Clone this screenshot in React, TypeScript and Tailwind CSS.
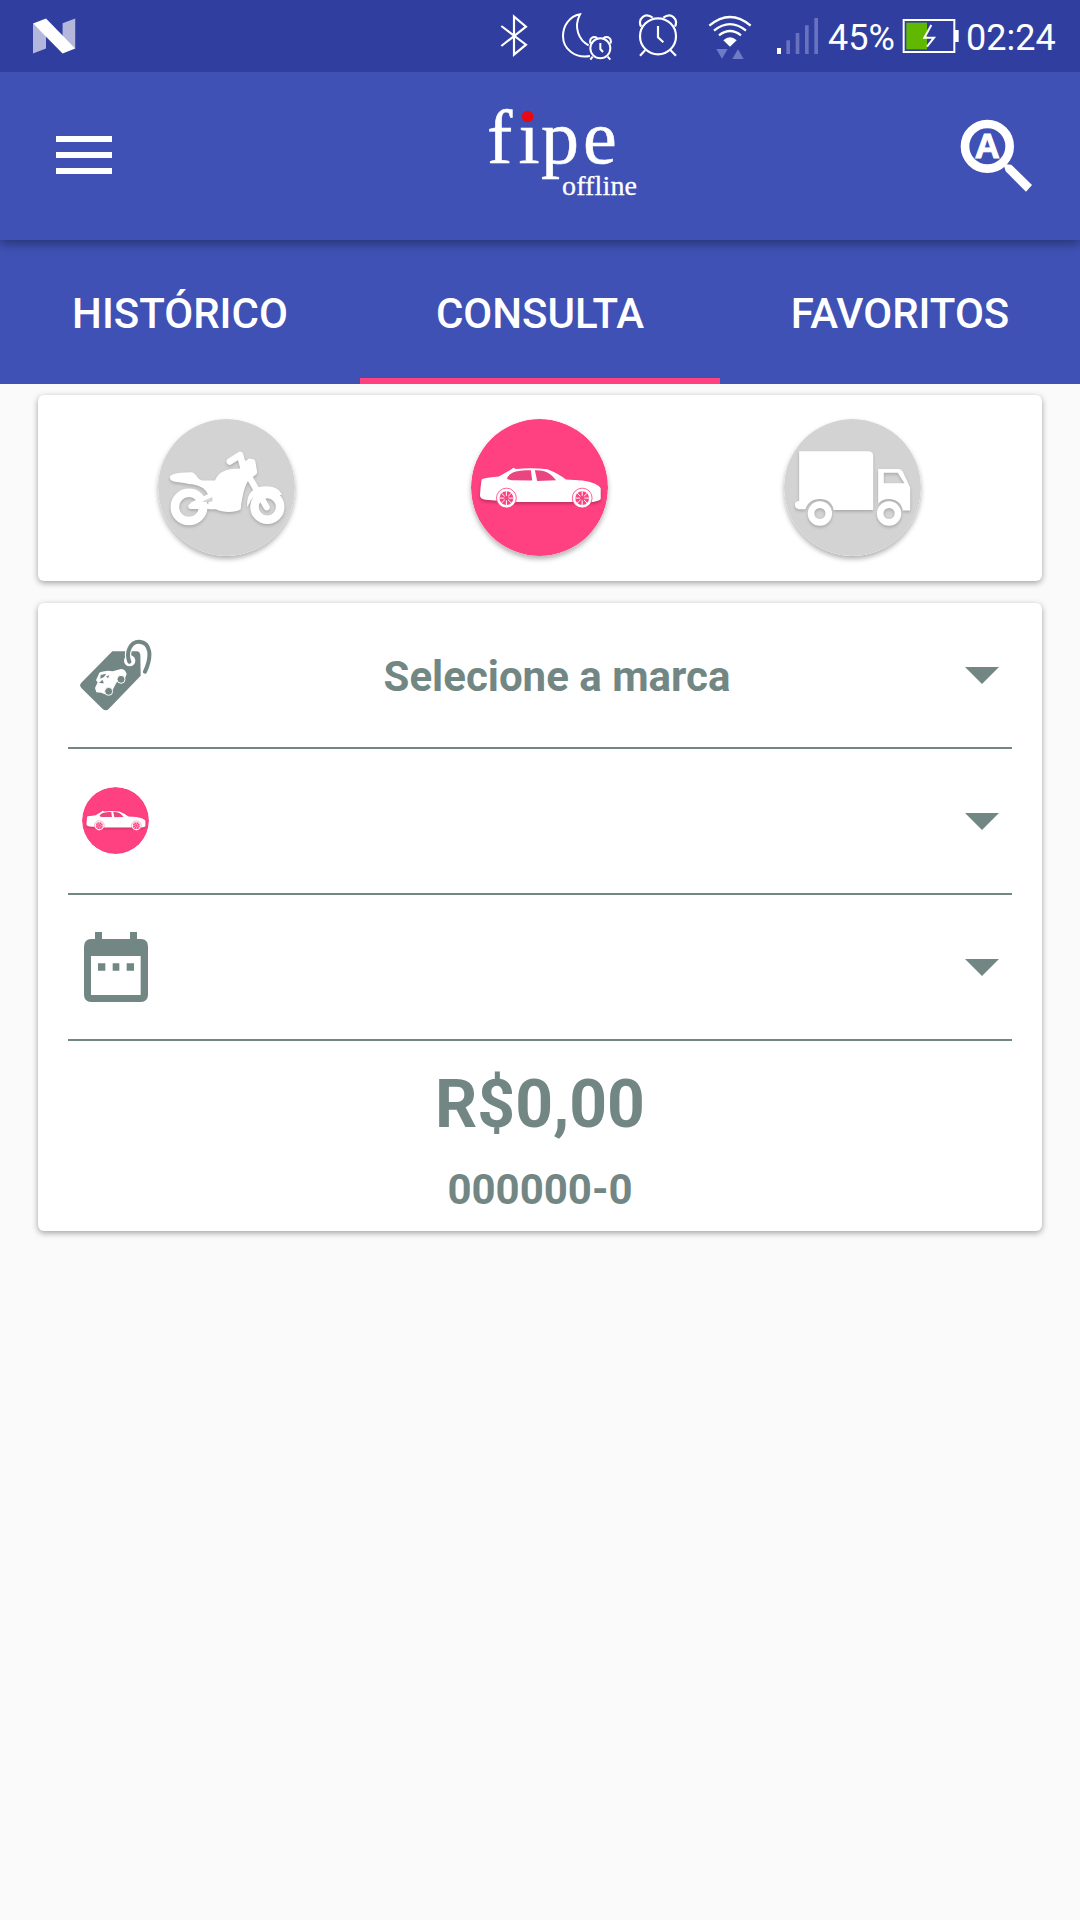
import React, { useState } from "react";
import clsx from "clsx";

const TABS = ["HISTÓRICO", "CONSULTA", "FAVORITOS"];

type VehicleType = "moto" | "carro" | "caminhao";

function NougatIcon() {
  return (
    <svg width="43" height="72" viewBox="33 0 43 72">
      <path d="M33 23.5 46 36V48.6L33 53.4ZM62.6 23.3 75.2 18.6V49L62.6 37Z" fill="#b3b7dc" />
      <path d="M33 23.5 46 18.6 75.2 48.6 62.6 53.4Z" fill="#fff" />
    </svg>
  );
}

function BluetoothIcon() {
  return (
    <svg width="28" height="72" viewBox="60 0 84 216" fill="none" stroke="#fff" strokeWidth="6.5">
      <path d="M64 78 138 134 102 164V50L138 80 64 138" />
    </svg>
  );
}

function MoonIcon() {
  return (
    <svg width="53" height="72" viewBox="240 0 159 216" fill="none" stroke="#fff" strokeWidth="6">
      <path d="M326 136C296 120 280 82 300 43 268 49 249 78 249 108 249 148 286 176 330 168" />
      <circle cx="361" cy="145" r="30" />
      <path d="M361 129V147L369 156M338 170 331 179M383 170 391 179" />
      <path d="M332 131C326 117 339 106 352 114M370 114C384 106 397 117 391 131" />
    </svg>
  );
}

function AlarmIcon() {
  return (
    <svg width="40" height="72" viewBox="474 0 120 216" fill="none" stroke="#fff" strokeWidth="6.5">
      <circle cx="534" cy="109" r="54" />
      <path d="M534 78V112L550 127M496 150 480 167M571 150 588 167" />
      <path d="M483 80C472 56 495 36 518 53M550 53C573 36 596 56 585 80" />
    </svg>
  );
}

function WifiIcon() {
  return (
    <svg width="44" height="72" viewBox="684 0 132 216" fill="none" stroke="#fff" strokeWidth="7">
      <path d="M688 77Q750 25 812 77M702 92Q750 53 798 92M717 106Q750 80 783 106" />
      <path d="M730 121Q750 103 770 121L750 140Z" fill="#fff" stroke="none" />
      <path d="M709 147H743L726 176ZM757 177H791L774 148Z" fill="#6f7bc4" stroke="none" />
    </svg>
  );
}

function SignalIcon() {
  return (
    <svg width="43" height="72" viewBox="48 0 129 216" fill="#6872bf">
      <path d="M51 144H63V162H51Z" fill="#fff" />
      <path d="M79 121H90V162H79ZM107 99H118V162H107ZM135 76H146V162H135ZM163 54H174V162H163Z" />
    </svg>
  );
}

function BatteryIcon() {
  return (
    <svg width="57" height="72" viewBox="427 0 171 216">
      <path d="M440 68H502V148H440Z" fill="#61b800" />
      <path d="M432 60H584V156H432Z" fill="none" stroke="#fff" strokeWidth="6" />
      <path d="M586 90H597V126H586Z" fill="#fff" />
      <path d="M515 75 494 113H523L502 140" fill="none" stroke="#fff" strokeWidth="6" />
    </svg>
  );
}

function StatusBar() {
  return (
    <div className="relative z-10 flex h-[72px] items-center bg-[#303f9f] pl-[33px] text-[36px] leading-none text-white">
      <NougatIcon />
      <div className="ml-[424px] flex items-center">
        <BluetoothIcon />
        <span className="ml-8">
          <MoonIcon />
        </span>
        <span className="ml-[25px]">
          <AlarmIcon />
        </span>
        <span className="ml-[30px]">
          <WifiIcon />
        </span>
        <span className="ml-6">
          <SignalIcon />
        </span>
        <span className="ml-[9px] w-[74px] pt-[3px]">45%</span>
        <BatteryIcon />
        <span className="ml-[7px] pt-[3px]">02:24</span>
      </div>
    </div>
  );
}

function Logo() {
  return (
    <svg
      width="160"
      height="136"
      viewBox="486 88 160 136"
      fill="#fff"
      stroke="#fff"
      fontFamily="'Liberation Serif', serif"
    >
      <text y="163" fontSize="76" strokeWidth="0.5" x="487 518.5 541 583">
        fıpe
      </text>
      <circle cx="527.7" cy="116.5" r="5.8" fill="#e60a14" stroke="none" />
      <text x="562" y="195" fontSize="28" textLength="75" strokeWidth="0.3">
        offline
      </text>
    </svg>
  );
}

function SearchIcon() {
  return (
    <svg width="73" height="73" viewBox="60 59 219 219">
      <circle cx="142" cy="141" r="67" fill="none" stroke="#fff" strokeWidth="26" />
      <path d="M190 194 214 196 276 257 258 277 197 216Z" fill="#fff" />
      <text
        x="142"
        y="177"
        textAnchor="middle"
        fontSize="104"
        fontWeight="bold"
        fontFamily="'Liberation Sans', sans-serif"
        fill="#fff"
        stroke="#fff"
        strokeWidth="3"
      >
        A
      </text>
    </svg>
  );
}

function Header() {
  return (
    <header className="relative flex h-[168px] items-center bg-[#3f51b5] pr-[47px] pl-14 shadow-[0_4px_10px_rgba(0,0,0,0.35)]">
      <button className="mb-0.5 flex w-14 flex-col gap-2.5">
        <span className="h-1.5 bg-white" />
        <span className="h-1.5 bg-white" />
        <span className="h-1.5 bg-white" />
      </button>
      <div className="mr-auto ml-[374px]">
        <Logo />
      </div>
      <div className="mb-0.5">
        <SearchIcon />
      </div>
    </header>
  );
}

function MotoIcon({ active }: { active: boolean }) {
  const color = active ? "#ff4081" : "#d3d3d3";
  return (
    <svg width="137" height="137" viewBox="54 54 416 416" className="rounded-full shadow-[0_3px_5px_rgba(0,0,0,0.3)]">
      <circle cx="262" cy="262" r="208" fill={color} />
      <g className="drop-shadow-[0_5px_5px_rgba(0,0,0,0.2)]">
        <circle cx="148" cy="321" r="43" fill="none" stroke="#fff" strokeWidth="26" />
        <circle cx="386" cy="321" r="39" fill="none" stroke="#fff" strokeWidth="26" />
        <g fill="none" stroke="#fff" strokeLinecap="round" strokeLinejoin="round">
          <path d="M272 183 303 163 313 200" strokeWidth="20" />
          <path d="M325 220 384 322" strokeWidth="19" />
          <path d="M154 319 218 319M160 313 215 287" strokeWidth="16" />
        </g>
        <path
          fill="#fff"
          d="M90 233C88 223 105 217 156 216 170 218 172 237 188 241L227 241C236 217 256 204 305 204L307 178 322 181 330 174 344 176Q349 177 350 185L355 215Q355 223 347 226L331 238C318 250 309 292 305 328 290 339 250 339 230 328L210 328 207 306 219 303 218 292 205 294C212 275 185 252 148 251 120 244 92 248 90 233Z"
        />
        <path
          fill="#fff"
          d="M325 322C321 280 344 258 382 258 404 258 427 268 430 285L418 285C385 268 343 280 333 307Z"
        />
      </g>
      <path d="M187 305 219 291V302L208 306Z" fill={color} />
    </svg>
  );
}

function CarIcon({ size, active = true }: { size: number; active?: boolean }) {
  const color = active ? "#ff4081" : "#d3d3d3";
  return (
    <svg
      width={size}
      height={size}
      viewBox="61 56 414 414"
      className={clsx("rounded-full", size > 100 && "shadow-[0_3px_5px_rgba(0,0,0,0.3)]")}
    >
      <circle cx="268" cy="263" r="207" fill={color} />
      <path
        fill="#fff"
        className="drop-shadow-[0_6px_5px_rgba(0,0,0,0.25)]"
        d="M88 288 90 262 93 239Q96 235 145 230L181 209 189 203 197 207Q245 202 292 208 325 221 348 239L398 242Q442 249 453 265V298Q451 303 430 307L190 307 105 300Q90 298 88 288Z"
      />
      <path
        fill={active ? "#ea4580" : "#c4c4c4"}
        d="M170 234C180 216 200 211 242 211L246 242 184 241Q168 239 170 234ZM254 211C285 209 304 222 318 241L261 243Z"
      />
      {[168, 397].map((cx) => (
        <g key={cx}>
          <circle cx={cx} cy="295" r="30" fill="#fff" stroke={color} strokeWidth="2.5" />
          <circle cx={cx} cy="295" r="21" fill={color} />
          <path
            d={`M${cx} 274V316M${cx - 21} 295H${cx + 21}M${cx - 15} 280L${cx + 15} 310M${cx + 15} 280L${cx - 15} 310`}
            stroke="#fff"
            strokeWidth="3"
          />
          <circle cx={cx} cy="295" r="7" fill={color} />
        </g>
      ))}
    </svg>
  );
}

function TruckIcon({ active }: { active: boolean }) {
  const color = active ? "#ff4081" : "#d3d3d3";
  return (
    <svg width="137" height="137" viewBox="70 54 416 416" className="rounded-full shadow-[0_3px_5px_rgba(0,0,0,0.3)]">
      <circle cx="278" cy="262" r="208" fill={color} />
      <g fill="#fff" className="drop-shadow-[0_5px_5px_rgba(0,0,0,0.2)]">
        <path d="M116 152H328Q341 154 341 167V330H221C217 309 201 297 179 297 155 297 142 309 135 328L115 328Q103 326 103 314 103 304 116 303Z" />
        <path
          fillRule="evenodd"
          d="M356 206H419Q427 206 431 214L453 262V332H431C427 309 410 297 389 297 374 297 363 303 356 311ZM373 217V249H436L415 217Z"
        />
        <circle cx="179" cy="341" r="27" fill="none" stroke="#fff" strokeWidth="20" />
        <circle cx="389" cy="341" r="27" fill="none" stroke="#fff" strokeWidth="20" />
      </g>
    </svg>
  );
}

function TagIcon() {
  return (
    <svg width="72" height="72" viewBox="60 56 216 216">
      <path
        fill="#728784"
        d="M157 93H233Q240 95 241 103L242 166 146 266Q137 274 128 266L64 203Q57 195 64 187Z"
      />
      <circle cx="209" cy="121" r="17" fill="#fff" />
      <path d="M208 124C197 96 211 63 238 64 273 67 276 108 255 154" fill="none" stroke="#fff" strokeWidth="19" />
      <path
        d="M208 124C197 96 211 63 238 64 273 67 276 108 255 154"
        fill="none"
        stroke="#728784"
        strokeWidth="12"
        strokeLinecap="round"
      />
      <path
        fill="#fff"
        d="M105 203 113 186 108 180 118 157Q120 154 144 151L158 153 183 146Q194 147 196 153L200 161 195 174 170 186 158 209 134 222 124 217 109 216Z"
      />
      <path fill="#728784" d="M122 164 139 160 132 170 121 175ZM117 188 127 178 132 189ZM138 169 147 164 145 174Z" />
      <circle cx="183" cy="177" r="12" fill="#728784" stroke="#fff" strokeWidth="3" />
      <circle cx="146" cy="213" r="12" fill="#728784" stroke="#fff" strokeWidth="3" />
    </svg>
  );
}

function CalendarIcon() {
  return (
    <svg width="64" height="70" viewBox="192 576 192 210" fill="#728784">
      <path
        fillRule="evenodd"
        d="M225 576H246V597H330V576H351V597H363Q384 598 384 619V765Q383 785 363 786H213Q193 785 192 765V619Q193 598 213 597H225ZM213 648V765H362V648Z"
      />
      <path d="M234 670H256V692H234ZM278 670H298V692H278ZM320 670H342V692H320Z" />
    </svg>
  );
}

function SelectRow({ icon, label }: { icon: React.ReactNode; label?: string }) {
  return (
    <div className="flex h-[146px] items-center border-b-2 border-[#728784]">
      <div className="flex w-24 justify-center">{icon}</div>
      <span className="flex-1 pt-[3px] text-center">{label}</span>
      <div className="flex w-[62px] justify-center pl-0.5">
        <svg width="34" height="17" viewBox="0 0 34 17">
          <path d="M0 0H34L17 17Z" fill="#728784" />
        </svg>
      </div>
    </div>
  );
}

export default function App() {
  const [tab, setTab] = useState("CONSULTA");
  const [vehicle, setVehicle] = useState<VehicleType>("carro");

  return (
    <div className="flex h-[1920px] w-[1080px] flex-col overflow-hidden bg-[#fafafa] font-[Roboto,sans-serif]">
      <StatusBar />
      <Header />
      <nav className="grid h-36 grid-cols-3 bg-[#3f51b5] text-[42px] font-medium text-white">
        {TABS.map((name) => (
          <button
            key={name}
            onClick={() => setTab(name)}
            className={clsx("border-b-6 pt-2", tab === name ? "border-[#ff4081]" : "border-transparent")}
          >
            {name}
          </button>
        ))}
      </nav>
      <main className="flex flex-col gap-[22px] px-[38px] pt-[11px]">
        <section className="flex h-[186px] items-center justify-center gap-44 rounded-md bg-white pr-0.5 pb-0.5 shadow-[0_2px_6px_rgba(0,0,0,0.36)]">
          <button onClick={() => setVehicle("moto")}>
            <MotoIcon active={vehicle === "moto"} />
          </button>
          <button onClick={() => setVehicle("carro")}>
            <CarIcon size={137} active={vehicle === "carro"} />
          </button>
          <button onClick={() => setVehicle("caminhao")}>
            <TruckIcon active={vehicle === "caminhao"} />
          </button>
        </section>
        <section className="h-[628px] rounded-md bg-white px-[30px] text-[42px] font-bold text-[#728784] shadow-[0_2px_6px_rgba(0,0,0,0.36)]">
          <SelectRow icon={<TagIcon />} label="Selecione a marca" />
          <SelectRow
            icon={
              <div className="pr-px pb-0.5">
                <CarIcon size={67} />
              </div>
            }
          />
          <SelectRow icon={<CalendarIcon />} />
          <p className="mt-6 text-center text-[66px] leading-[80px]">R$0,00</p>
          <p className="mt-[17px] text-center leading-[56px]">000000-0</p>
        </section>
      </main>
    </div>
  );
}
